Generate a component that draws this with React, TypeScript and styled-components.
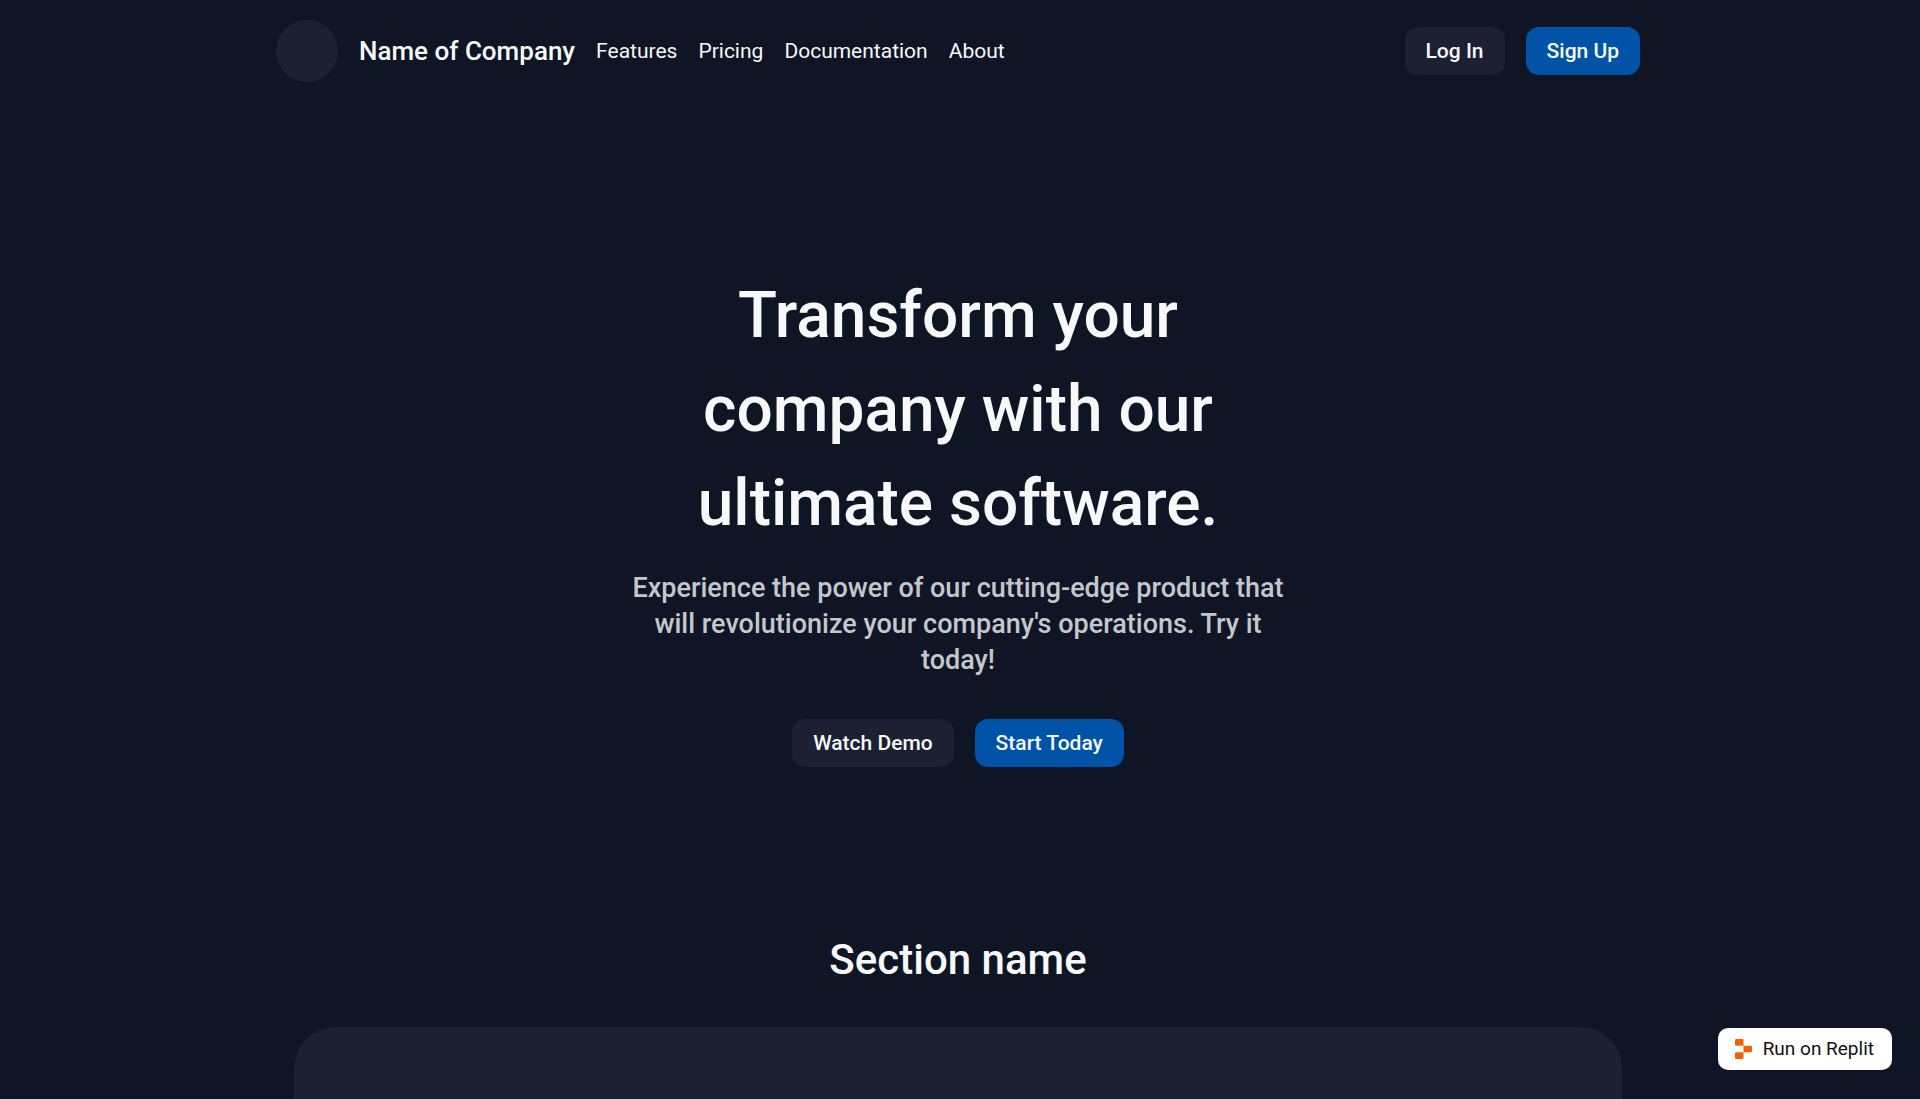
import React from "react";
import styled, { createGlobalStyle } from "styled-components";

const color = {
  page: "#0f1524",
  surface: "#1c2033",
  primary: "#0053a6",
  text: "#f5f9f8",
  muted: "#c2c8cc",
  replit: "#f26207",
};

const GlobalStyle = createGlobalStyle`
  *, *::before, *::after { box-sizing: border-box; }
  body {
    margin: 0;
    background: ${color.page};
    color: ${color.text};
    font-family: Roboto, "Liberation Sans", sans-serif;
    font-size: 21px;
    line-height: 28px;
    scrollbar-width: none;
  }
  h1, h2, p { margin: 0; }
`;

const Page = styled.div`
  display: flex;
  flex-direction: column;
  align-items: center;
  min-height: 100vh;
  padding-right: 4px;
`;

const Header = styled.header`
  display: flex;
  align-items: center;
  justify-content: space-between;
  width: 100%;
  max-width: 1364px;
  padding: 20px 0;
`;

const Brand = styled.div`
  display: flex;
  align-items: center;
  gap: 21px;
`;

const Logo = styled.div`
  width: 62px;
  height: 62px;
  border-radius: 50%;
  background: ${color.surface};
`;

const Name = styled.span`
  font-size: 26px;
  font-weight: 500;
  line-height: 36px;
`;

const Nav = styled.nav`
  display: flex;
  gap: 21px;
`;

const NavLink = styled.a`
  color: inherit;
  text-decoration: none;
`;

const Actions = styled.div`
  display: flex;
  gap: 21px;
`;

const Button = styled.button<{ $primary?: boolean }>`
  padding: 10px 21px;
  border: 0;
  border-radius: 13px;
  background: ${(p) => (p.$primary ? color.primary : color.surface)};
  color: ${color.text};
  font: inherit;
  font-weight: 500;
  cursor: pointer;
`;

const Main = styled.main`
  display: flex;
  flex-direction: column;
  align-items: center;
  width: 100%;
`;

const Hero = styled.section`
  display: flex;
  flex-direction: column;
  align-items: center;
  width: 100%;
  max-width: 660px;
  padding: 167px 0 164px;
  text-align: center;
`;

const Title = styled.h1`
  max-width: 560px;
  font-size: 64px;
  font-weight: 500;
  line-height: 94px;
`;

const Lead = styled.p`
  margin: 19px 0 41px;
  color: ${color.muted};
  font-size: 27px;
  font-weight: 500;
  line-height: 36px;
`;

const Section = styled.section`
  display: flex;
  flex-direction: column;
  align-items: center;
  gap: 38px;
  width: 100%;
  max-width: 1328px;
`;

const SectionTitle = styled.h2`
  font-size: 42px;
  font-weight: 500;
  line-height: 58px;
`;

const Card = styled.div`
  width: 100%;
  height: 520px;
  border-radius: 41px;
  background: ${color.surface};
`;

const Badge = styled.a`
  position: fixed;
  right: 28px;
  bottom: 29px;
  display: flex;
  align-items: center;
  gap: 11px;
  height: 42px;
  padding: 0 18px 0 17px;
  border-radius: 10px;
  background: #fff;
  color: #111;
  font-size: 19px;
  text-decoration: none;
`;

const BadgeIcon = () => (
  <svg width="17" height="20" viewBox="0 0 17 20" fill={color.replit} aria-hidden="true">
    <path d="M1.2 0H7.3Q8.5 0 8.5 1.2V6.7H1.2Q0 6.7 0 5.5V1.2Q0 0 1.2 0Z" />
    <path d="M8.5 6.7H15.8Q17 6.7 17 7.9V12.1Q17 13.3 15.8 13.3H8.5Z" />
    <path d="M1.2 13.3H8.5V18.8Q8.5 20 7.3 20H1.2Q0 20 0 18.8V14.5Q0 13.3 1.2 13.3Z" />
  </svg>
);

const links = ["Features", "Pricing", "Documentation", "About"];

export default function App() {
  return (
    <>
      <GlobalStyle />
      <Page>
        <Header>
          <Brand>
            <Logo />
            <Name>Name of Company</Name>
            <Nav>
              {links.map((label) => (
                <NavLink key={label} href="#">
                  {label}
                </NavLink>
              ))}
            </Nav>
          </Brand>
          <Actions>
            <Button>Log In</Button>
            <Button $primary>Sign Up</Button>
          </Actions>
        </Header>
        <Main>
          <Hero>
            <Title>Transform your company with our ultimate software.</Title>
            <Lead>
              Experience the power of our cutting-edge product that will revolutionize your
              company's operations. Try it today!
            </Lead>
            <Actions>
              <Button>Watch Demo</Button>
              <Button $primary>Start Today</Button>
            </Actions>
          </Hero>
          <Section>
            <SectionTitle>Section name</SectionTitle>
            <Card />
          </Section>
        </Main>
      </Page>
      <Badge href="#">
        <BadgeIcon />
        Run on Replit
      </Badge>
    </>
  );
}
